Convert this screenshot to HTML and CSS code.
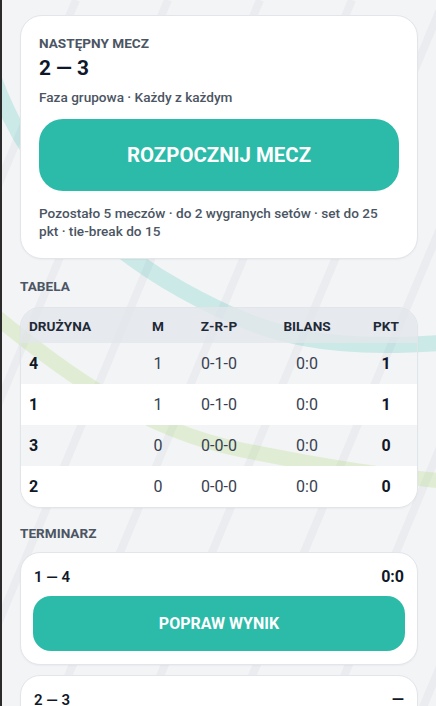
FILE: index.html
```html
<!DOCTYPE html>
<html lang="pl">
<head>
<meta charset="utf-8">
<title>Turniej</title>
<link rel="stylesheet" href="styles.css">
</head>
<body>
<div class="frame">
  <svg class="bg" width="436" height="760" viewBox="0 0 436 760" aria-hidden="true">
    <g class="stripes">
      <line x1="74" y1="0" x2="-262" y2="800"/>
      <line x1="166" y1="0" x2="-170" y2="800"/>
      <line x1="258" y1="0" x2="-78" y2="800"/>
      <line x1="350" y1="0" x2="14" y2="800"/>
      <line x1="442" y1="0" x2="106" y2="800"/>
      <line x1="534" y1="0" x2="198" y2="800"/>
      <line x1="626" y1="0" x2="290" y2="800"/>
      <line x1="718" y1="0" x2="382" y2="800"/>
      <line x1="810" y1="0" x2="474" y2="800"/>
    </g>
    <path class="arc-teal" d="M -20 40 C 10 160, 90 240, 180 290 S 330 352, 450 342"/>
    <path class="arc-green" d="M -20 305 C 60 372, 140 430, 240 450 S 380 475, 450 482"/>
  </svg>

  <main class="content">
    <section class="card next">
      <div class="label">NASTĘPNY MECZ</div>
      <div class="pair">2 — 3</div>
      <div class="meta">Faza grupowa · Każdy z każdym</div>
      <button class="btn btn-lg" type="button">ROZPOCZNIJ MECZ</button>
      <p class="info">Pozostało 5 meczów · do 2 wygranych setów · set do 25 pkt · tie-break do 15</p>
    </section>

    <h2 class="section">TABELA</h2>
    <div class="table">
      <div class="row head">
        <span class="c-team">DRUŻYNA</span>
        <span class="c-num">M</span>
        <span class="c-num">Z-R-P</span>
        <span class="c-num">BILANS</span>
        <span class="c-num">PKT</span>
      </div>
      <div class="row">
        <span class="c-team strong">4</span>
        <span class="c-num">1</span>
        <span class="c-num">0-1-0</span>
        <span class="c-num">0:0</span>
        <span class="c-num strong">1</span>
      </div>
      <div class="row alt">
        <span class="c-team strong">1</span>
        <span class="c-num">1</span>
        <span class="c-num">0-1-0</span>
        <span class="c-num">0:0</span>
        <span class="c-num strong">1</span>
      </div>
      <div class="row">
        <span class="c-team strong">3</span>
        <span class="c-num">0</span>
        <span class="c-num">0-0-0</span>
        <span class="c-num">0:0</span>
        <span class="c-num strong">0</span>
      </div>
      <div class="row alt">
        <span class="c-team strong">2</span>
        <span class="c-num">0</span>
        <span class="c-num">0-0-0</span>
        <span class="c-num">0:0</span>
        <span class="c-num strong">0</span>
      </div>
    </div>

    <h2 class="section section-fx">TERMINARZ</h2>
    <div class="fixtures">
      <div class="fixture">
        <div class="fx-top">
          <span class="fx-pair">1 — 4</span>
          <span class="fx-score">0:0</span>
        </div>
        <button class="btn btn-md" type="button">POPRAW WYNIK</button>
      </div>
      <div class="fixture">
        <div class="fx-top">
          <span class="fx-pair">2 — 3</span>
          <span class="fx-score">—</span>
        </div>
        <button class="btn btn-md" type="button">ROZPOCZNIJ</button>
      </div>
    </div>
  </main>
</div>
</body>
</html>
```

FILE: styles.css
```css
* {
  box-sizing: border-box;
}

html, body {
  margin: 0;
  padding: 0;
  background: #f3f4f6;
}

body {
  font-family: Roboto, "Noto Sans", "Liberation Sans", sans-serif;
  color: #111827;
  overflow: hidden;
}

.frame {
  position: relative;
  min-height: 706px;
  border-left: 2px solid #2b2b2b;
  background: #f3f4f6;
  overflow: hidden;
}

.bg {
  position: absolute;
  top: 0;
  left: 0;
  z-index: 0;
}

.stripes line {
  stroke: #eaecef;
  stroke-width: 8;
}

.arc-teal {
  fill: none;
  stroke: rgba(45, 188, 168, 0.2);
  stroke-width: 16;
}

.arc-green {
  fill: none;
  stroke: rgba(160, 215, 90, 0.22);
  stroke-width: 15;
}

.content {
  position: relative;
  z-index: 1;
  padding: 15px 18px 0 18px;
}

/* Next match card */
.card {
  background: #ffffff;
  border: 1px solid #e2e5ea;
  border-radius: 22px;
  padding: 18px 18px 18px 18px;
  box-shadow: 0 1px 2px rgba(15, 23, 42, 0.04);
}

.label {
  font-size: 13.6px;
  line-height: 18px;
  font-weight: 700;
  color: #4b5563;
}

.pair {
  margin-top: 3px;
  font-size: 20.8px;
  line-height: 26px;
  font-weight: 700;
  color: #0f172a;
}

.meta {
  margin-top: 7px;
  font-size: 13.6px;
  line-height: 18px;
  font-weight: 500;
  color: #4b5563;
}

.btn {
  display: flex;
  align-items: center;
  justify-content: center;
  width: 100%;
  border: none;
  background: #2cbba8;
  color: #ffffff;
  font-family: Roboto, "Noto Sans", "Liberation Sans", sans-serif;
  font-weight: 700;
  padding: 0;
  cursor: pointer;
}

.btn-lg {
  margin-top: 13px;
  height: 72px;
  border-radius: 24px;
  font-size: 20.4px;
}

.info {
  margin: 13px 0 0 0;
  font-size: 13.6px;
  line-height: 18.2px;
  font-weight: 500;
  color: #4b5563;
}

/* Section headers */
.section {
  margin: 18px 0 12px 0;
  font-size: 13.6px;
  line-height: 18px;
  font-weight: 700;
  color: #4b5563;
}

.section-fx {
  margin-top: 16px;
  margin-bottom: 10px;
}

/* Table */
.table {
  border: 1px solid #e1e4e8;
  border-radius: 20px;
  overflow: hidden;
  box-shadow: 0 1px 2px rgba(15, 23, 42, 0.04);
}

.row {
  display: grid;
  grid-template-columns: 1fr 54px 68px 108px 50px;
  align-items: center;
  height: 41px;
  padding: 0 6px 0 8px;
  font-size: 16px;
  color: #374151;
}

.row.head {
  height: 35px;
  background: rgba(226, 230, 235, 0.8);
  font-size: 13.6px;
  font-weight: 700;
  color: #1f2937;
}

.row.alt {
  background: #ffffff;
}

.c-team {
  text-align: left;
}

.c-num {
  text-align: center;
}

.strong {
  font-weight: 700;
  color: #111827;
}

/* Fixtures */
.fixtures {
  display: flex;
  flex-direction: column;
  gap: 10px;
}

.fixture {
  background: #ffffff;
  border: 1px solid #e2e5ea;
  border-radius: 20px;
  padding: 14px 12px 13px 12px;
  box-shadow: 0 1px 2px rgba(15, 23, 42, 0.04);
}

.fx-top {
  display: flex;
  justify-content: space-between;
  align-items: center;
  line-height: 20px;
  color: #111827;
}

.fx-pair {
  font-size: 15px;
  font-weight: 600;
  padding-left: 1px;
}

.fx-score {
  font-size: 16px;
  font-weight: 700;
  padding-right: 1px;
}

.btn-md {
  margin-top: 9px;
  height: 55px;
  border-radius: 18px;
  font-size: 16px;
}
```
